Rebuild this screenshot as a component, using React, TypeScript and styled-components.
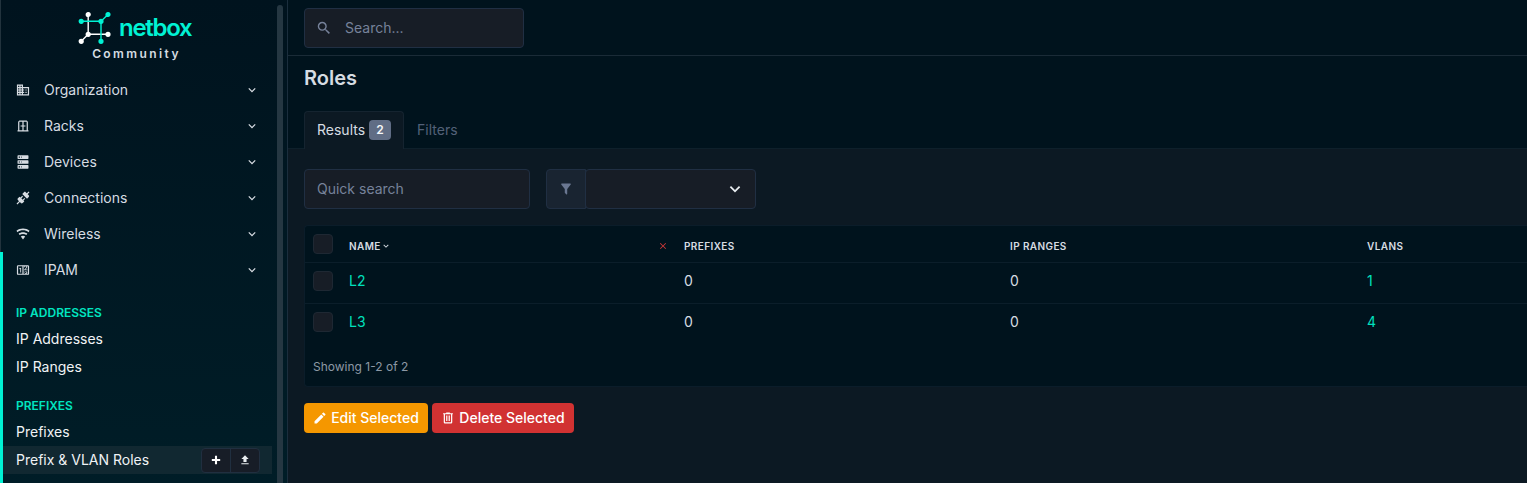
import React from "react";
import styled, { createGlobalStyle } from "styled-components";

const GlobalStyle = createGlobalStyle`
  *, *::before, *::after { box-sizing: border-box; }
  html, body { margin: 0; height: 100%; overflow: hidden; background: #0c1923; }
  body {
    font-family: Inter, "Liberation Sans", sans-serif;
    font-size: 14px;
    line-height: 20px;
    color: #d6dce2;
    -webkit-font-smoothing: antialiased;
  }
`;

const paths = {
  domain:
    "M18,15H16V17H18M18,11H16V13H18M20,19H12V17H14V15H12V13H14V11H12V9H20M10,7H8V5H10M10,11H8V9H10M10,15H8V13H10M10,19H8V17H10M6,7H4V5H6M6,11H4V9H6M6,15H4V13H6M6,19H4V17H6M12,7V3H2V21H22V7H12Z",
  rack:
    "M6,3H18L20,5V19H21V21H3V19H4V5L6,3M6,5V19H11V13H8V11H11V5H6M13,5V11H16V13H13V19H18V5H13Z",
  server:
    "M4,1H20A1,1 0 0,1 21,2V6A1,1 0 0,1 20,7H4A1,1 0 0,1 3,6V2A1,1 0 0,1 4,1M4,9H20A1,1 0 0,1 21,10V14A1,1 0 0,1 20,15H4A1,1 0 0,1 3,14V10A1,1 0 0,1 4,9M4,17H20A1,1 0 0,1 21,18V22A1,1 0 0,1 20,23H4A1,1 0 0,1 3,22V18A1,1 0 0,1 4,17M9,5H10V3H9V5M9,13H10V11H9V13M9,21H10V19H9V21M5,3V5H7V3H5M5,11V13H7V11H5M5,19V21H7V19H5Z",
  connection:
    "M21.4 7.5C22.2 8.3 22.2 9.6 21.4 10.3L18.6 13.1L10.8 5.3L13.6 2.5C14.4 1.7 15.7 1.7 16.4 2.5L18.2 4.3L21.2 1.3L22.6 2.7L19.6 5.7L21.4 7.5M15.6 13.3L14.2 11.9L11.4 14.7L9.3 12.6L12.1 9.8L10.7 8.4L7.9 11.2L6.4 9.8L3.6 12.6C2.8 13.4 2.8 14.7 3.6 15.4L5.4 17.2L1.4 21.2L2.8 22.6L6.8 18.6L8.6 20.4C9.4 21.2 10.7 21.2 11.4 20.4L14.2 17.6L12.8 16.2L15.6 13.3Z",
  wifi:
    "M12,21L15.6,16.2C14.6,15.45 13.35,15 12,15C10.65,15 9.4,15.45 8.4,16.2L12,21M12,3C7.95,3 4.21,4.34 1.2,6.6L3,9C5.5,7.12 8.62,6 12,6C15.38,6 18.5,7.12 21,9L22.8,6.6C19.79,4.34 16.05,3 12,3M12,9C9.3,9 6.81,9.89 4.8,11.4L6.6,13.8C8.1,12.67 9.97,12 12,12C14.03,12 15.9,12.67 17.4,13.8L19.2,11.4C17.19,9.89 14.7,9 12,9Z",
  counter:
    "M4,4H20A2,2 0 0,1 22,6V18A2,2 0 0,1 20,20H4A2,2 0 0,1 2,18V6A2,2 0 0,1 4,4M4,6V18H11V6H4M20,18V6H18.76C19,6.54 18.95,7.07 18.95,7.13C18.88,7.8 18.41,8.5 18.24,8.75L15.91,11.3L19.23,11.28L19.24,12.5L14.04,12.47L14,11.47C14,11.47 17.05,8.24 17.2,7.95C17.34,7.67 17.91,6 16.5,6C15.27,6.05 15.41,7.3 15.41,7.3L13.87,7.31C13.87,7.31 13.88,6.65 14.25,6H13V18H15.58L15.57,17.14L16.54,17.13C16.54,17.13 17.45,16.97 17.46,16.08C17.5,15.08 16.65,15.08 16.5,15.08C16.37,15.08 15.43,15.13 15.43,15.95H13.91C13.91,15.95 13.95,13.89 16.5,13.89C19.1,13.89 18.96,15.91 18.96,15.91C18.96,15.91 19,17.16 17.85,17.63L18.37,18H20M8.92,16H7.42V10.2L5.62,10.76V9.53L8.76,8.41H8.92V16Z",
  chevron: "M7.41,8.58L12,13.17L16.59,8.58L18,10L12,16L6,10L7.41,8.58Z",
  magnify:
    "M9.5,3A6.5,6.5 0 0,1 16,9.5C16,11.11 15.41,12.59 14.44,13.73L14.71,14H15.5L20.5,19L19,20.5L14,15.5V14.71L13.73,14.44C12.59,15.41 11.11,16 9.5,16A6.5,6.5 0 0,1 3,9.5A6.5,6.5 0 0,1 9.5,3M9.5,5C7,5 5,7 5,9.5C5,12 7,14 9.5,14C12,14 14,12 14,9.5C14,7 12,5 9.5,5Z",
  filter:
    "M14,12V19.88C14.04,20.18 13.94,20.5 13.71,20.71C13.32,21.1 12.69,21.1 12.3,20.71L10.29,18.7C10.06,18.47 9.96,18.16 10,17.87V12H9.97L4.21,4.62C3.87,4.19 3.95,3.56 4.38,3.22C4.57,3.08 4.78,3 5,3V3H19V3C19.22,3 19.43,3.08 19.62,3.22C20.05,3.56 20.13,4.19 19.79,4.62L14.03,12H14Z",
  pencil:
    "M20.71,7.04C21.1,6.65 21.1,6 20.71,5.63L18.37,3.29C18,2.9 17.35,2.9 16.96,3.29L15.12,5.12L18.87,8.87M3,17.25V21H6.75L17.81,9.93L14.06,6.18L3,17.25Z",
  trash:
    "M9,3V4H4V6H5V19A2,2 0 0,0 7,21H17A2,2 0 0,0 19,19V6H20V4H15V3H9M7,6H17V19H7V6M9,8V17H11V8H9M13,8V17H15V8H13Z",
  plus: "M20 14H14V20H10V14H4V10H10V4H14V10H20V14Z",
  upload: "M9,16V10H5L12,3L19,10H15V16H9M5,20V18H19V20H5Z",
  close:
    "M19,6.41L17.59,5L12,10.59L6.41,5L5,6.41L10.59,12L5,17.59L6.41,19L12,13.41L17.59,19L19,17.59L13.41,12L19,6.41Z",
};

const Glyph = styled.svg`
  flex: none;
  fill: currentColor;
`;

const Icon = ({ name, size = 14 }: { name: keyof typeof paths; size?: number }) => (
  <Glyph width={size} height={size} viewBox="0.5 0.5 23 23">
    <path d={paths[name]} />
  </Glyph>
);

const Page = styled.div`
  display: flex;
  width: 100%;
  height: 100vh;
  overflow: hidden;
`;

const Sidebar = styled.aside`
  display: flex;
  flex: none;
  width: 288px;
  height: 100%;
  border-right: 1px solid #1b2e3d;
  background: linear-gradient(180deg, #00131e 0%, #001d27 100%);
`;

const SidebarBody = styled.div`
  width: 272px;
  flex: none;
`;

const Scrollbar = styled.div`
  width: 6px;
  margin: 5px 0 0 5px;
  border-radius: 3px 3px 0 0;
  background: #253742;
`;

const Brand = styled.div`
  display: flex;
  flex-direction: column;
  align-items: center;
  height: 72px;
  padding-top: 11px;
  border-left: 1px solid #22333d;
`;

const Logo = styled.div`
  display: flex;
  align-items: center;
  gap: 8px;
  width: 117px;
  height: 33px;
`;

const Wordmark = styled.span`
  font-size: 24px;
  font-weight: 600;
  line-height: 30px;
  letter-spacing: -1.3px;
  color: #00f2d4;
`;

const Edition = styled.div`
  margin: 1px 0 0 0;
  font-size: 12px;
  font-weight: 600;
  line-height: 18px;
  letter-spacing: 2.4px;
`;

const NavGroup = styled.div<{ $active?: boolean }>`
  border-left: ${(p) => (p.$active ? "3px solid #00f2d4" : "1px solid #22333d")};
  height: ${(p) => (p.$active ? "231px" : "auto")};
`;

const NavItem = styled.div<{ $active?: boolean }>`
  display: flex;
  align-items: center;
  height: 36px;
  padding: 0 13px 0 ${(p) => (p.$active ? 13 : 15)}px;
`;

const NavLabel = styled.span`
  flex: 1;
  margin-left: 14px;
`;

const GroupTitle = styled.div`
  height: 25px;
  padding: 0 13px;
  font-size: 12px;
  font-weight: 600;
  line-height: 26px;
  color: #00e5c0;
`;

const SubMenu = styled.div`
  padding-top: 12px;
`;

const SubItem = styled.div<{ $current?: boolean }>`
  display: flex;
  align-items: center;
  justify-content: space-between;
  height: 28px;
  padding: 0 12px 0 13px;
  color: #f0f3f5;
  background: ${(p) => (p.$current ? "#112831" : "transparent")};
`;

const QuickActions = styled.div`
  display: flex;
  height: 25px;
  border: 1px solid #202f40;
  border-radius: 4px;
  background: #171d27;
  overflow: hidden;
`;

const QuickAction = styled.span`
  display: flex;
  align-items: center;
  justify-content: center;
  width: 28px;
  color: #fff;
  & + & { width: 29px; border-left: 1px solid #202f40; color: #e8edf0; }
`;

const Main = styled.main`
  flex: 1;
  min-width: 0;
  background: #0c1923;
`;

const TopBar = styled.header`
  height: 56px;
  padding: 8px 16px;
  border-bottom: 1px solid #1a2b37;
  background: #00131d;
`;

const Field = styled.div<{ $width: number }>`
  display: flex;
  align-items: center;
  width: ${(p) => p.$width}px;
  height: 40px;
  padding: 0 12px;
  border: 1px solid #202f43;
  border-radius: 4px;
  background: #171d26;
  color: #76829a;
`;

const SearchIcon = styled.span`
  display: flex;
  width: 28px;
  margin-left: -1px;
  margin-right: 1px;
`;

const Heading = styled.div`
  height: 93px;
  background: #00131d;
  padding: 8px 16px 0;
  border-bottom: 1px solid #0e202b;
`;

const Title = styled.h1`
  margin: 0 0 19px;
  font-size: 20px;
  line-height: 28px;
  font-weight: 600;
`;

const Tabs = styled.div`
  display: flex;
  height: 38px;
`;

const Tab = styled.div<{ $active?: boolean }>`
  display: flex;
  align-items: center;
  gap: 4px;
  height: 38px;
  padding: 0 12px 1px;
  border: 1px solid ${(p) => (p.$active ? "#152430" : "transparent")};
  border-bottom: 0;
  border-radius: 4px 4px 0 0;
  background: ${(p) => (p.$active ? "#0c1923" : "transparent")};
  color: ${(p) => (p.$active ? "#d6dce2" : "#536178")};
`;

const Badge = styled.span`
  width: 22px;
  height: 20px;
  border-radius: 4px;
  background: #606d85;
  color: #f5f7f9;
  font-size: 12px;
  font-weight: 600;
  text-align: center;
`;

const Content = styled.section`
  padding: 20px 0 0 16px;
`;

const Controls = styled.div`
  display: flex;
  gap: 16px;
`;

const FilterGroup = styled.div`
  display: flex;
  width: 210px;
  height: 40px;
`;

const FilterAddon = styled.div`
  display: flex;
  align-items: center;
  justify-content: center;
  width: 40px;
  border: 1px solid #202f43;
  border-radius: 4px 0 0 4px;
  background: #192431;
  color: #6a7791;
`;

const FilterSelect = styled.div`
  display: flex;
  flex: 1;
  align-items: center;
  justify-content: flex-end;
  margin-left: -1px;
  padding-right: 10px;
  border: 1px solid #202f43;
  border-radius: 4px;
  background: #171d26;
  color: #e8edf0;
`;

const TableCard = styled.div`
  height: 162px;
  margin-top: 16px;
  border: 1px solid #0b1d2a;
  border-right: 0;
  border-radius: 4px 0 0 4px;
  background: #00131d;
`;

const Row = styled.div<{ $head?: boolean }>`
  display: grid;
  grid-template-columns: 44px 309px 26px 326px 357px 1fr;
  align-items: center;
  height: ${(p) => (p.$head ? 37 : 41)}px;
  padding-bottom: ${(p) => (p.$head ? 0 : 4)}px;
  border-bottom: 1px solid #0b1e2a;
  &:nth-child(3) { border-bottom-color: transparent; }
`;

const HeadCell = styled.span`
  display: flex;
  align-items: center;
  padding-top: 4px;
  font-size: 10px;
  font-weight: 600;
  line-height: 16px;
  letter-spacing: 0.4px;
`;

const ClearSort = styled.span`
  display: flex;
  padding-top: 4px;
  color: #d63939;
`;

const Cell = styled.span<{ $link?: boolean }>`
  color: ${(p) => (p.$link ? "#00e0bd" : "#d6dce2")};
`;

const Checkbox = styled.span`
  width: 20px;
  height: 20px;
  margin-left: 8px;
  border: 1px solid #1e2833;
  border-radius: 4px;
  background: #171d26;
`;

const Summary = styled.div`
  padding: 12px 8px;
  font-size: 12px;
  color: #8d99a5;
`;

const Actions = styled.div`
  display: flex;
  gap: 4px;
  margin-top: 16px;
`;

const Button = styled.button<{ $color: string; $width: number }>`
  display: flex;
  align-items: center;
  justify-content: center;
  gap: 4px;
  width: ${(p) => p.$width}px;
  height: 30px;
  padding: 0;
  border: 0;
  border-radius: 4px;
  background: ${(p) => p.$color};
  color: #fff;
  font: 500 14px/20px Inter, sans-serif;
`;

const LogoMark = () => (
  <Glyph width="33" height="33" viewBox="0 0 33 33" strokeWidth="1.4">
    <g stroke="#fff" fill="#fff">
      <path d="M10.2 3.5V23.3H30M10.2 23.3L3.2 30.3" fill="none" />
      <circle cx="10.2" cy="3.5" r="1.9" />
      <circle cx="10.2" cy="23.3" r="1.9" />
      <circle cx="30" cy="23.3" r="1.9" />
      <circle cx="3.2" cy="30.3" r="1.9" />
    </g>
    <g stroke="#00f2d4" fill="#00f2d4">
      <path d="M3.2 10.3H23V30.3M23 10.3L30 3.5" fill="none" />
      <circle cx="3.2" cy="10.3" r="1.9" />
      <circle cx="23" cy="10.3" r="1.9" />
      <circle cx="30" cy="3.5" r="1.9" />
      <circle cx="23" cy="30.3" r="1.9" />
    </g>
  </Glyph>
);

const navItems: { icon: keyof typeof paths; label: string }[] = [
  { icon: "domain", label: "Organization" },
  { icon: "rack", label: "Racks" },
  { icon: "server", label: "Devices" },
  { icon: "connection", label: "Connections" },
  { icon: "wifi", label: "Wireless" },
];

const rows = [
  { name: "L2", prefixes: 0, ranges: 0, vlans: 1 },
  { name: "L3", prefixes: 0, ranges: 0, vlans: 4 },
];

export default function App() {
  return (
    <Page>
      <GlobalStyle />
      <Sidebar>
        <SidebarBody>
          <Brand>
            <Logo>
              <LogoMark />
              <Wordmark>netbox</Wordmark>
            </Logo>
            <Edition>Community</Edition>
          </Brand>
          <NavGroup>
            {navItems.map((item) => (
              <NavItem key={item.label}>
                <Icon name={item.icon} />
                <NavLabel>{item.label}</NavLabel>
                <Icon name="chevron" />
              </NavItem>
            ))}
          </NavGroup>
          <NavGroup $active>
            <NavItem $active>
              <Icon name="counter" />
              <NavLabel>IPAM</NavLabel>
              <Icon name="chevron" />
            </NavItem>
            <SubMenu>
              <GroupTitle>IP ADDRESSES</GroupTitle>
              <SubItem>IP Addresses</SubItem>
              <SubItem>IP Ranges</SubItem>
            </SubMenu>
            <SubMenu>
              <GroupTitle>PREFIXES</GroupTitle>
              <SubItem>Prefixes</SubItem>
              <SubItem $current>
                Prefix &amp; VLAN Roles
                <QuickActions>
                  <QuickAction>
                    <Icon name="plus" size={12} />
                  </QuickAction>
                  <QuickAction>
                    <Icon name="upload" size={12} />
                  </QuickAction>
                </QuickActions>
              </SubItem>
            </SubMenu>
          </NavGroup>
        </SidebarBody>
        <Scrollbar />
      </Sidebar>
      <Main>
        <TopBar>
          <Field $width={220}>
            <SearchIcon>
              <Icon name="magnify" size={16} />
            </SearchIcon>
            Search...
          </Field>
        </TopBar>
        <Heading>
          <Title>Roles</Title>
          <Tabs>
            <Tab $active>
              Results <Badge>2</Badge>
            </Tab>
            <Tab>Filters</Tab>
          </Tabs>
        </Heading>
        <Content>
          <Controls>
            <Field $width={226}>Quick search</Field>
            <FilterGroup>
              <FilterAddon>
                <Icon name="filter" />
              </FilterAddon>
              <FilterSelect>
                <Icon name="chevron" size={20} />
              </FilterSelect>
            </FilterGroup>
          </Controls>
          <TableCard>
            <Row $head>
              <Checkbox />
              <HeadCell>
                NAME
                <Icon name="chevron" size={10} />
              </HeadCell>
              <ClearSort>
                <Icon name="close" size={10} />
              </ClearSort>
              <HeadCell>PREFIXES</HeadCell>
              <HeadCell>IP RANGES</HeadCell>
              <HeadCell>VLANS</HeadCell>
            </Row>
            {rows.map((row) => (
              <Row key={row.name}>
                <Checkbox />
                <Cell $link>{row.name}</Cell>
                <span />
                <Cell>{row.prefixes}</Cell>
                <Cell>{row.ranges}</Cell>
                <Cell $link>{row.vlans}</Cell>
              </Row>
            ))}
            <Summary>Showing 1-2 of 2</Summary>
          </TableCard>
          <Actions>
            <Button $color="#f59700" $width={124}>
              <Icon name="pencil" />
              Edit Selected
            </Button>
            <Button $color="#d13232" $width={142}>
              <Icon name="trash" />
              Delete Selected
            </Button>
          </Actions>
        </Content>
      </Main>
    </Page>
  );
}
